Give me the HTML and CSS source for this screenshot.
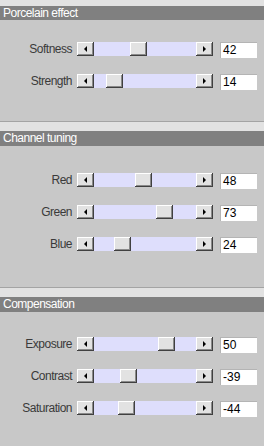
FILE: index.html
```html
<!DOCTYPE html>
<html lang="en">

<head>
  <meta charset="UTF-8">
  <meta name="viewport" content="width=device-width, initial-scale=1.0">
  <title>Porcelain</title>
  <link rel="stylesheet" href="styles.css">
</head>

<body>
  <div class="section first">
    <div class="head">Porcelain effect</div>
    <div class="rows">
      <div class="row">
        <span class="label">Softness</span>
        <div class="bar"><span class="btn left"></span><div class="track"><span class="thumb" style="left: 36px"></span></div><span class="btn right"></span></div>
        <div class="value">42</div>
      </div>
      <div class="row">
        <span class="label">Strength</span>
        <div class="bar"><span class="btn left"></span><div class="track"><span class="thumb" style="left: 12px"></span></div><span class="btn right"></span></div>
        <div class="value">14</div>
      </div>
    </div>
  </div>

  <div class="section second">
    <div class="head">Channel tuning</div>
    <div class="rows">
      <div class="row">
        <span class="label">Red</span>
        <div class="bar"><span class="btn left"></span><div class="track"><span class="thumb" style="left: 41px"></span></div><span class="btn right"></span></div>
        <div class="value">48</div>
      </div>
      <div class="row">
        <span class="label">Green</span>
        <div class="bar"><span class="btn left"></span><div class="track"><span class="thumb" style="left: 62px"></span></div><span class="btn right"></span></div>
        <div class="value">73</div>
      </div>
      <div class="row">
        <span class="label">Blue</span>
        <div class="bar"><span class="btn left"></span><div class="track"><span class="thumb" style="left: 20px"></span></div><span class="btn right"></span></div>
        <div class="value">24</div>
      </div>
    </div>
  </div>

  <div class="section third">
    <div class="head">Compensation</div>
    <div class="rows">
      <div class="row">
        <span class="label">Exposure</span>
        <div class="bar"><span class="btn left"></span><div class="track"><span class="thumb" style="left: 64px"></span></div><span class="btn right"></span></div>
        <div class="value">50</div>
      </div>
      <div class="row">
        <span class="label">Contrast</span>
        <div class="bar"><span class="btn left"></span><div class="track"><span class="thumb" style="left: 26px"></span></div><span class="btn right"></span></div>
        <div class="value">-39</div>
      </div>
      <div class="row">
        <span class="label">Saturation</span>
        <div class="bar"><span class="btn left"></span><div class="track"><span class="thumb" style="left: 24px"></span></div><span class="btn right"></span></div>
        <div class="value">-44</div>
      </div>
    </div>
  </div>
</body>

</html>
```

FILE: styles.css
```css
html,
body {
  margin: 0;
  padding: 0;
}

body {
  width: 264px;
  height: 446px;
  background: #c8c8c8;
  font-family: "Liberation Sans", Arial, sans-serif;
  overflow: hidden;
}

.section {
  border-top: 1px solid #a4a4a4;
  padding-top: 9px;
  background: linear-gradient(#e2e2e2, #e2e2e2) top / 100% 9px no-repeat;
}

.section.first {
  border-top: 0;
  padding-top: 6px;
  background-size: 100% 6px;
}

.head {
  height: 15px;
  line-height: 15px;
  background: #808080;
  color: #fff;
  font-size: 12px;
  letter-spacing: -0.5px;
  padding-left: 3px;
}

.first .head {
  height: 14px;
  line-height: 14px;
}

.first .rows {
  padding: 13px 0 24px;
}

.second .rows {
  padding: 18px 0 27px;
}

.third .rows {
  padding: 16px 0 22px;
}

.row {
  height: 32px;
  display: flex;
  align-items: center;
}

.label {
  width: 72px;
  text-align: right;
  font-size: 12px;
  letter-spacing: -0.5px;
  color: #3a3a3a;
  margin-right: 5px;
}

.bar {
  width: 136px;
  height: 14px;
  display: flex;
}

.btn,
.thumb {
  width: 17px;
  height: 14px;
  box-sizing: border-box;
  background: #e2e2e2;
  box-shadow: inset -1px -1px 0 #404040, inset 1px 1px 0 #fff, inset -2px -2px 0 #8a8a8a;
  display: flex;
  align-items: center;
  justify-content: center;
}

.btn::after {
  content: "";
  width: 0;
  height: 0;
  border-top: 3px solid transparent;
  border-bottom: 3px solid transparent;
  margin-top: -1px;
}

.btn.left::after {
  border-right: 3px solid #000;
  margin-left: -1px;
}

.btn.right::after {
  border-left: 3px solid #000;
}

.track {
  flex: 1;
  position: relative;
  background: #dedefc;
}

.thumb {
  position: absolute;
  top: 0;
}

.value {
  width: 37px;
  height: 16px;
  box-sizing: border-box;
  margin-left: 7px;
  margin-top: 1px;
  background: #fff;
  border-top: 1px solid #b4b4b4;
  border-left: 1px solid #b4b4b4;
  font-size: 12px;
  line-height: 14px;
  padding-left: 2px;
  color: #000;
}
```
